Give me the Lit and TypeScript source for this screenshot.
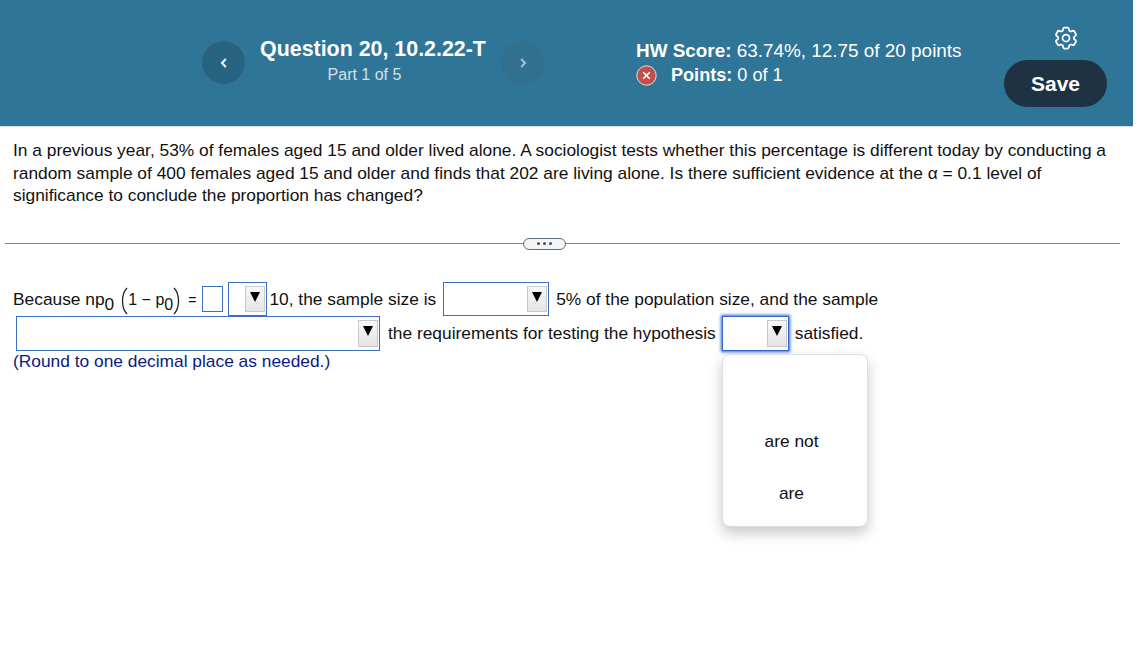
import { LitElement, html, css } from "lit";
import { customElement } from "lit/decorators.js";

@customElement("app-root")
export class AppRoot extends LitElement {
  static styles = css`
    :host { display: block; width: 1148px; height: 656px; background: #fff; font-family: "Liberation Sans", Arial, sans-serif; color: #111; overflow: hidden; position: relative; }
    .hdr { height: 127px; width: 1133px; background: #2e7598; display: flex; color: #fff; box-sizing: border-box; border-bottom: 1px solid #d5dde3; }
    .nav { width: 43px; height: 43px; border-radius: 50%; display: flex; align-items: center; justify-content: center; flex: none; }
    .prev { margin: 41px 0 0 202px; background: #296382; }
    .next { margin: 41px 0 0 0; background: #32708f; }
    .title { width: 256px; margin: 36px 0 0 0; text-align: center; flex: none; }
    .title b { display: block; font-size: 21.4px; line-height: 27px; }
    .title span { display: block; font-size: 16px; line-height: 22px; color: #d5e0e8; margin-right: 17px; margin-top: 1px; }
    .score { margin: 39px 0 0 92px; font-size: 18.9px; line-height: 24px; width: 368px; flex: none; }
    .pts { display: flex; align-items: center; font-size: 18.1px; }
    .pts svg { margin-right: 14px; }
    .actions { display: flex; flex-direction: column; align-items: center; margin-top: 24px; width: 103px; flex: none; }
    .gear { margin: 0 0 -1px 20px; display: block; }
    .save { margin-top: 9px; width: 103px; height: 47px; border-radius: 24px; background: #1f3243; color: #fff; font-size: 21px; font-weight: 700; display: flex; align-items: center; justify-content: center; }
    .q { margin: 12px 0 0 13px; width: 1110px; font-size: 17.35px; line-height: 22.5px; }
    .sep { margin: 36px 0 0 5px; width: 1115px; height: 1px; background: #7a8794; position: relative; }
    .pill { position: absolute; left: 518px; top: -5px; width: 41px; height: 10px; border: 1px solid #5f6f80; border-radius: 6px; background: #f3f5f7; display: flex; align-items: center; justify-content: center; gap: 3px; }
    .pill i { width: 3px; height: 3px; border-radius: 50%; background: #45525f; }
    .ans { margin: 38px 0 0 13px; font-size: 17.35px; }
    .line { display: flex; align-items: center; white-space: pre; }
    .l1 { height: 34px; }
    .l2 { height: 35px; }
    .l1 > span:not(.dd):not(.box) { margin-top: 2px; }
    .sub { position: relative; top: 5px; }
    .math { display: flex; align-items: center; margin-left: 5px; font-size: 16px; }
    .paren { margin: 2px 0 0 0; }
    .eq { margin: 0 6px 0 6px; font-size: 14px; }
    .box { width: 21px; height: 26px; border: 1px solid #3a6fc4; box-sizing: border-box; flex: none; margin-right: 5px; }
    .dd { display: flex; justify-content: flex-end; align-items: stretch; box-sizing: border-box; border: 1px solid #3a6fc4; height: 100%; padding: 3px 1px 3px 0; background: #fff; flex: none; }
    .dd .btn { width: 20px; box-sizing: border-box; border: 1px solid #c9c9c9; background: linear-gradient(#f8f8f8, #e4e4e4); display: flex; align-items: center; justify-content: center; padding-bottom: 4px; }
    .tri { width: 0; height: 0; border-left: 5px solid transparent; border-right: 5px solid transparent; border-top: 10.5px solid #000; }
    .dd.focus { box-shadow: 0 0 3px 1px #2f66d0; border-color: #2f66d0; }
    .t1 { margin-left: 2px; margin-right: 7px; }
    .t2 { margin-left: 7px; }
    .dd.wide { margin-left: 3px; }
    .t3 { margin: 0 6px 0 8px; }
    .t4 { margin-left: 6px; }
    .hint { color: #0a1a80; line-height: 22px; margin-top: -1px; }
    .menu { position: absolute; left: 722px; top: 354px; width: 146px; height: 173px; box-sizing: border-box; background: #fff; border: 1px solid #dedede; border-radius: 8px; box-shadow: 0 6px 14px rgba(0,0,0,0.22); display: flex; flex-direction: column; align-items: center; font-size: 17.35px; padding-right: 7px; }
    .menu div { line-height: 20px; }
    .menu .a { margin-top: 76px; }
    .menu .b { margin-top: 32px; }
  `;

  private dd(w: number, cls = "") {
    return html`<span class="dd ${cls}" style="width:${w}px"><span class="btn"><span class="tri"></span></span></span>`;
  }

  render() {
    return html`
      <div class="hdr">
        <div class="nav prev"><svg width="10" height="12" viewBox="0 0 10 12"><path d="M6.8 2 3 6l3.8 4" fill="none" stroke="#fff" stroke-width="2"/></svg></div>
        <div class="title"><b>Question 20, 10.2.22-T</b><span>Part 1 of 5</span></div>
        <div class="nav next"><svg width="10" height="12" viewBox="0 0 10 12"><path d="M3.2 2 7 6l-3.8 4" fill="none" stroke="#a9c0cf" stroke-width="2"/></svg></div>
        <div class="score">
          <div><b>HW Score:</b> 63.74%, 12.75 of 20 points</div>
          <div class="pts">
            <svg width="21" height="21" viewBox="0 0 21 21"><circle cx="10.5" cy="10.5" r="9.7" fill="#c0504d" stroke="#e8e0e0" stroke-width="1"/><path d="M7.2 7.2l6.6 6.6M13.8 7.2l-6.6 6.6" stroke="#fff" stroke-width="1.6"/></svg>
            <span><b>Points:</b> 0 of 1</span>
          </div>
        </div>
        <div class="actions">
          <svg class="gear" width="28" height="28" viewBox="0 0 24 24" fill="none" stroke="#fff" stroke-width="1.5" stroke-linejoin="round"><path d="M9.594 3.94c.09-.542.56-.94 1.11-.94h2.593c.55 0 1.02.398 1.11.94l.213 1.281c.063.374.313.686.645.87.074.04.147.083.22.127.325.196.72.257 1.075.124l1.217-.456a1.125 1.125 0 0 1 1.37.49l1.296 2.247a1.125 1.125 0 0 1-.26 1.431l-1.003.827c-.293.241-.438.613-.43.992a7.723 7.723 0 0 1 0 .255c-.008.378.137.75.43.991l1.004.827c.424.35.534.955.26 1.43l-1.298 2.247a1.125 1.125 0 0 1-1.369.491l-1.217-.456c-.355-.133-.75-.072-1.076.124a6.47 6.47 0 0 1-.22.128c-.331.183-.581.495-.644.869l-.213 1.281c-.09.543-.56.94-1.11.94h-2.594c-.55 0-1.019-.398-1.11-.94l-.213-1.281c-.062-.374-.312-.686-.644-.87a6.52 6.52 0 0 1-.22-.127c-.325-.196-.72-.257-1.076-.124l-1.217.456a1.125 1.125 0 0 1-1.369-.49l-1.297-2.247a1.125 1.125 0 0 1 .26-1.431l1.004-.827c.292-.24.437-.613.43-.991a6.932 6.932 0 0 1 0-.255c.007-.38-.138-.751-.43-.992l-1.004-.827a1.125 1.125 0 0 1-.26-1.43l1.297-2.247a1.125 1.125 0 0 1 1.37-.491l1.216.456c.356.133.751.072 1.076-.124.072-.044.146-.086.22-.128.332-.183.582-.495.644-.869l.214-1.28Z"/><circle cx="12" cy="12" r="3"/></svg>
          <div class="save">Save</div>
        </div>
      </div>
      <div class="q">In a previous year, 53% of females aged 15 and older lived alone. A sociologist tests whether this percentage is different today by conducting a random sample of 400 females aged 15 and older and finds that 202 are living alone. Is there sufficient evidence at the α = 0.1 level of significance to conclude the proportion has changed?</div>
      <div class="sep"><div class="pill"><i></i><i></i><i></i></div></div>
      <div class="ans">
        <div class="line l1">
          <span>Because np<span class="sub">0</span></span>
          <span class="math">
            <svg class="paren" width="9" height="28" viewBox="0 0 9 28"><path d="M8 1C2 7 2 21 8 27" fill="none" stroke="#222" stroke-width="1.3"/></svg>
            <span>1 − p<span class="sub">0</span></span>
            <svg class="paren" width="9" height="28" viewBox="0 0 9 28"><path d="M1 1C7 7 7 21 1 27" fill="none" stroke="#222" stroke-width="1.3"/></svg>
            <span class="eq">=</span>
          </span>
          <span class="box"></span>
          ${this.dd(39)}
          <span class="t1">10, the sample size is</span>
          ${this.dd(106)}
          <span class="t2">5% of the population size, and the sample</span>
        </div>
        <div class="line l2">
          ${this.dd(364, "wide")}
          <span class="t3">the requirements for testing the hypothesis</span>
          ${this.dd(67, "focus")}
          <span class="t4">satisfied.</span>
        </div>
        <div class="hint">(Round to one decimal place as needed.)</div>
      </div>
      <div class="menu"><div class="a">are not</div><div class="b">are</div></div>
    `;
  }
}
